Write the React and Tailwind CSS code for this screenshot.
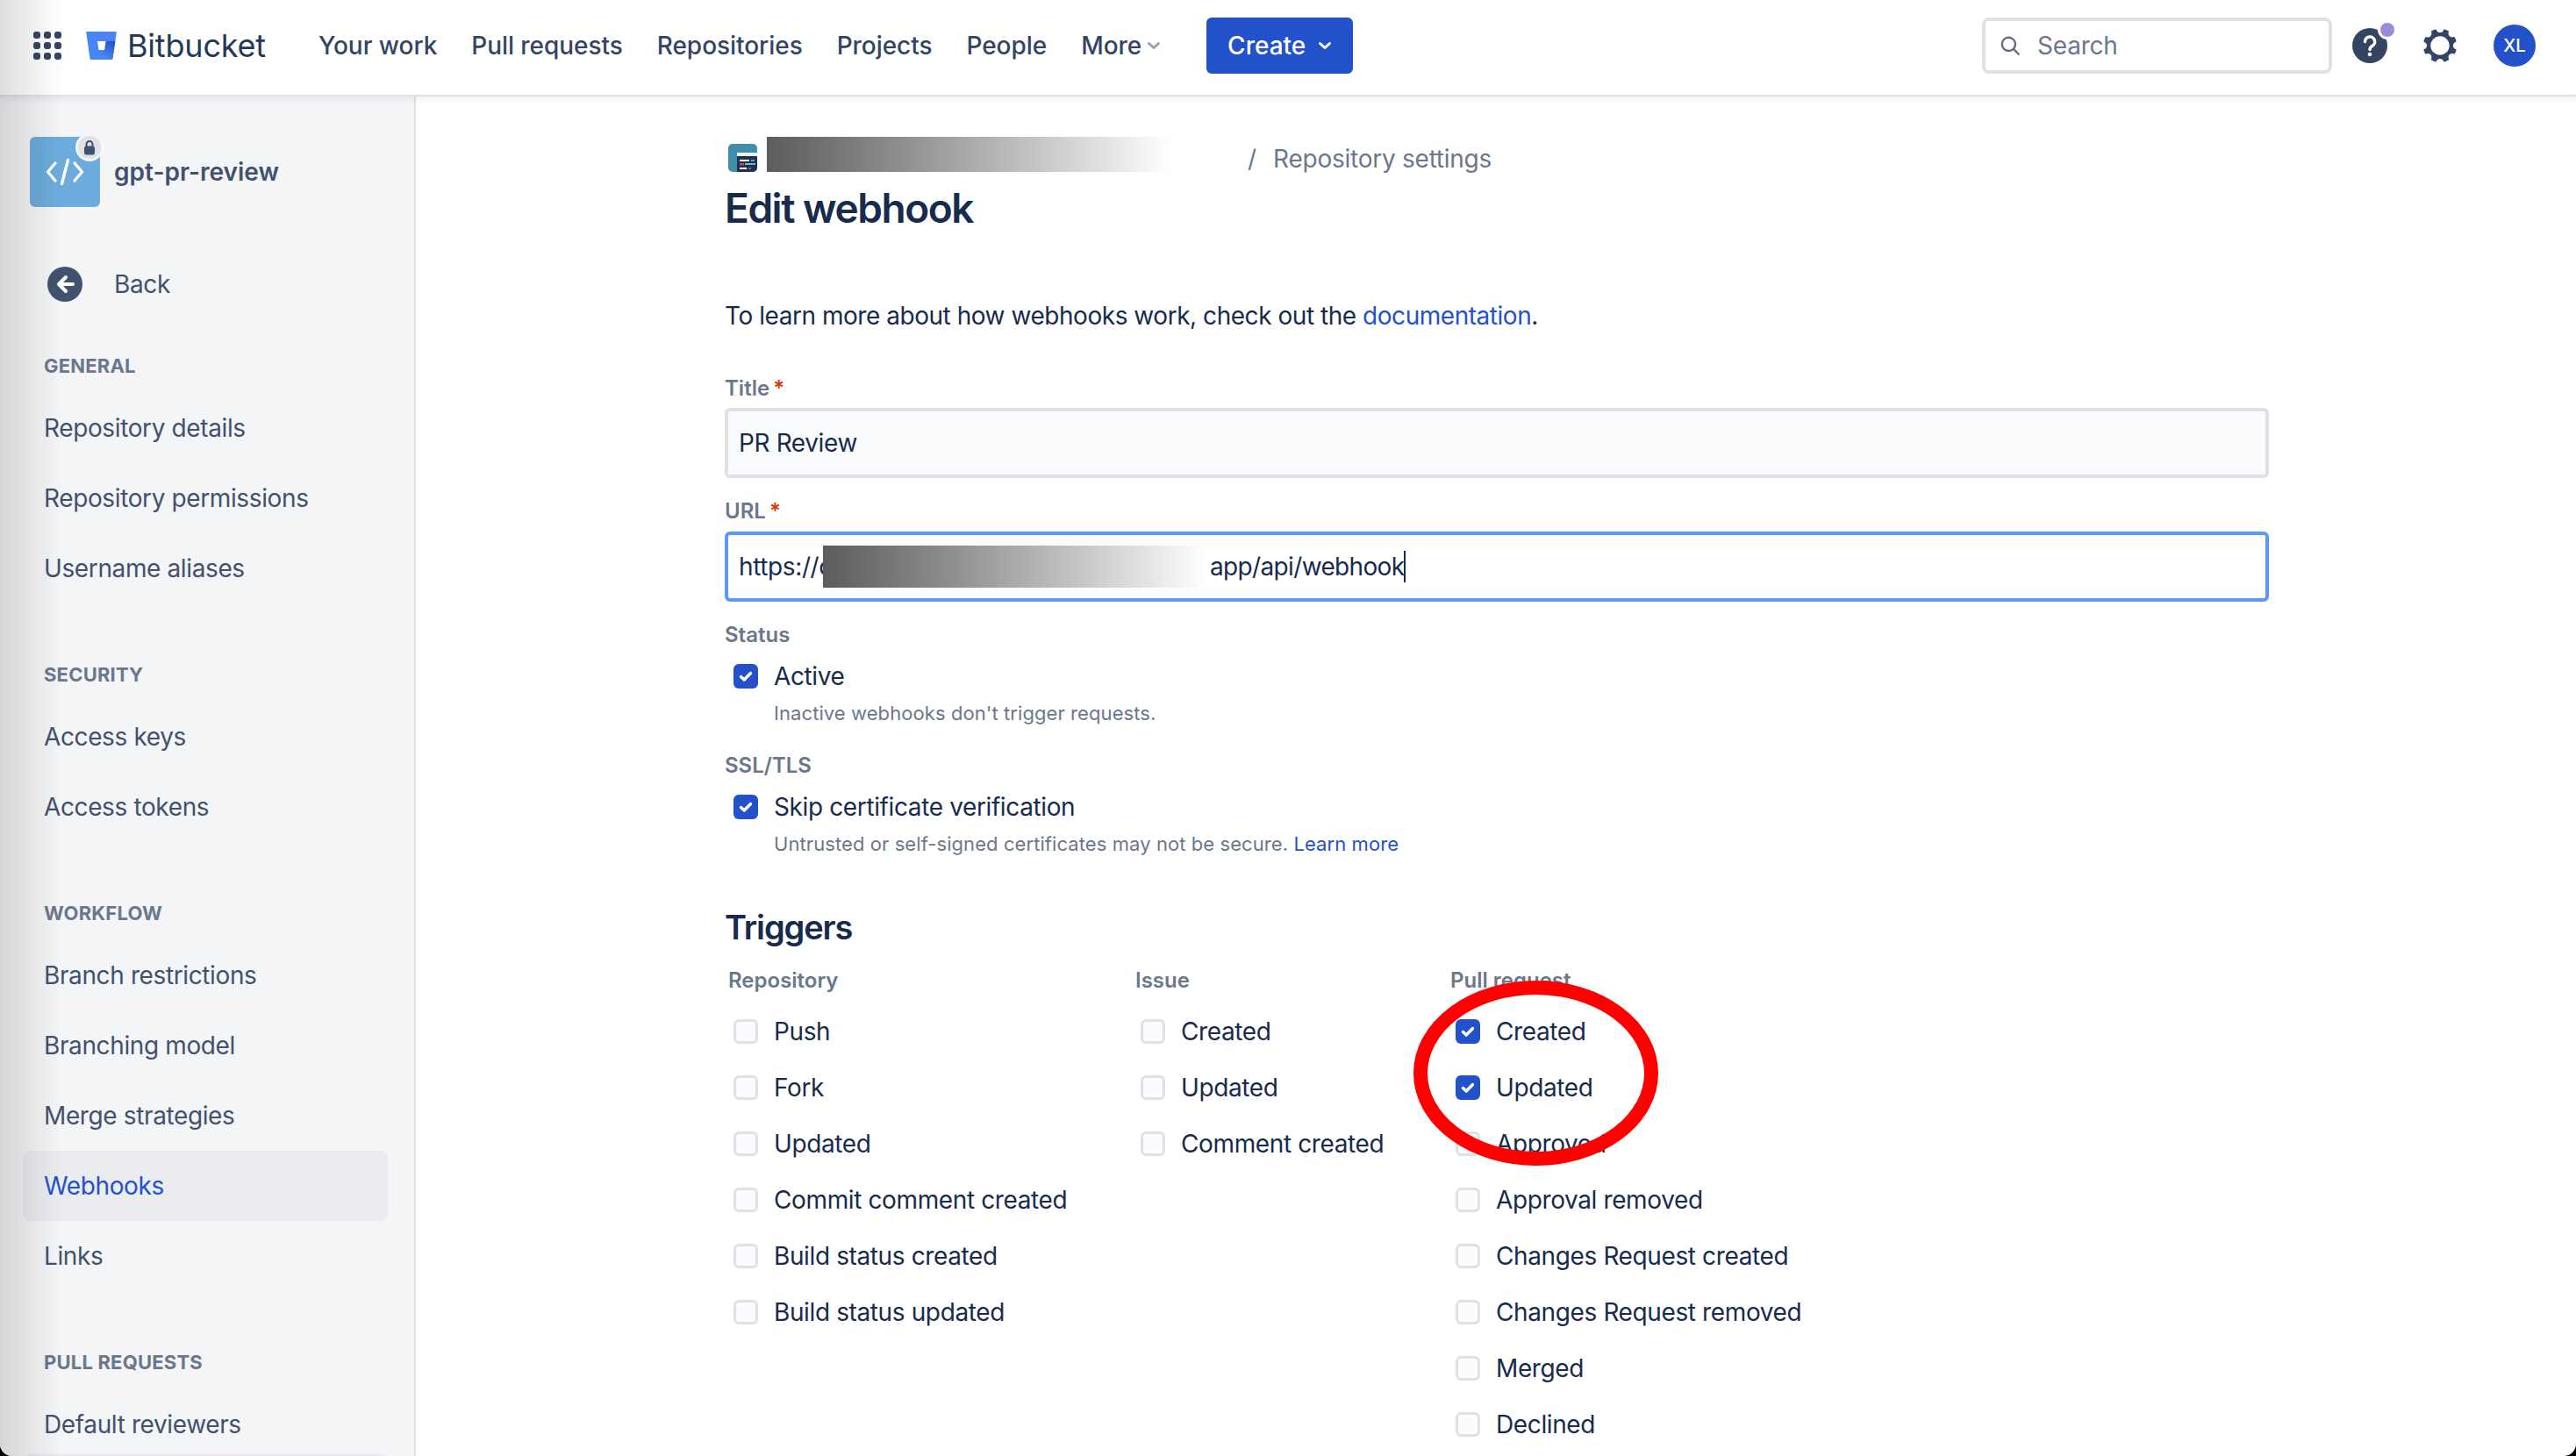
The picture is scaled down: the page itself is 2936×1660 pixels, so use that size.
import React from 'react';

const GEAR = "M11.701 16.7a5.002 5.002 0 110-10.003 5.002 5.002 0 010 10.004m8.368-3.117a1.995 1.995 0 01-1.346-1.885c0-.876.563-1.613 1.345-1.885a.48.48 0 00.315-.574 8.947 8.947 0 00-.836-1.993.477.477 0 00-.598-.195 2.04 2.04 0 01-1.29.08 1.988 1.988 0 01-1.404-1.395 2.04 2.04 0 01.076-1.297.478.478 0 00-.196-.597 8.98 8.98 0 00-1.975-.826.479.479 0 00-.574.314 1.995 1.995 0 01-1.885 1.346 1.994 1.994 0 01-1.884-1.345.482.482 0 00-.575-.315c-.708.2-1.379.485-2.004.842a.47.47 0 00-.198.582A2.002 2.002 0 014.445 7.06a.478.478 0 00-.595.196 8.946 8.946 0 00-.833 1.994.48.48 0 00.308.572 1.995 1.995 0 011.323 1.877c0 .867-.552 1.599-1.324 1.877a.479.479 0 00-.308.57 8.99 8.99 0 00.723 1.79.477.477 0 00.624.194c.595-.273 1.343-.264 2.104.238.117.077.225.185.302.3.527.8.512 1.58.198 2.188a.473.473 0 00.168.628 8.946 8.946 0 002.11.897.474.474 0 00.57-.313 1.995 1.995 0 011.886-1.353c.878 0 1.618.567 1.887 1.353a.475.475 0 00.57.313 8.964 8.964 0 002.084-.883.473.473 0 00.167-.631c-.318-.608-.337-1.393.191-2.195.077-.116.185-.225.302-.302.772-.511 1.527-.513 2.125-.23a.477.477 0 00.628-.19 8.925 8.925 0 00.728-1.793.478.478 0 00-.314-.573";

function Chevron({ className }) {
  return (
    <svg viewBox="0 0 16 10" className={className} fill="none" stroke="currentColor" strokeWidth="3" strokeLinecap="round" strokeLinejoin="round">
      <path d="M2.5 2.5 L8 7.5 L13.5 2.5" />
    </svg>
  );
}

function AppGrid() {
  const pts = [0, 12, 24];
  return (
    <svg width="32" height="32" viewBox="0 0 32 32" className="shrink-0">
      {pts.map((y) => pts.map((x) => <rect key={`${x}-${y}`} x={x} y={y} width="8" height="8" rx="3" fill="#344563" />))}
    </svg>
  );
}

function Logo() {
  return (
    <svg width="35" height="32" viewBox="0 0 35 32" className="shrink-0">
      <defs>
        <linearGradient id="bbg" x1="1" y1="0" x2="0.45" y2="0.8">
          <stop offset="0" stopColor="#1b4fc4" />
          <stop offset="1" stopColor="#4a86f3" />
        </linearGradient>
      </defs>
      <path d="M1 0 H34 Q35 0 34.8 1 L30.5 30.8 Q30.3 32 29.2 32 H5.8 Q4.7 32 4.5 30.8 L0.2 1 Q0 0 1 0 Z" fill="#4a86f3" />
      <path d="M22.5 11 H33.3 L30.5 30.8 Q30.3 32 29.2 32 H8 L21 21 Z" fill="url(#bbg)" />
      <path d="M13 11 H22.5 L21 21 H14.5 Z" fill="#fff" />
    </svg>
  );
}

function Check({ on }) {
  if (!on) return <span className="block w-[28px] h-[28px] shrink-0 rounded-[6px] border-[3px] border-[#dfe1e6] bg-[#fafbfc]" />;
  return (
    <span className="flex w-[28px] h-[28px] shrink-0 items-center justify-center rounded-[6px] bg-[#2351c9]">
      <svg width="28" height="28" viewBox="0 0 28 28" fill="none" stroke="#fff" strokeWidth="3.4" strokeLinecap="round" strokeLinejoin="round">
        <path d="M8.5 14.5 L12.2 18 L19.5 10.5" />
      </svg>
    </span>
  );
}

function SideHead({ children, first }) {
  return (
    <div className={`h-[32px] flex items-center pl-[50px] text-[22px] font-bold tracking-[0.2px] text-[#6b778c] uppercase ${first ? 'mt-[37px]' : 'mt-[65px]'} mb-[15px]`}>
      {children}
    </div>
  );
}

function SideItem({ children, active }) {
  return (
    <div className={`h-[80px] flex items-center ml-[26px] mr-[30px] pl-[24px] rounded-[8px] text-[28px] tracking-[-0.38px] ${active ? 'bg-[#ebecf0] text-[#2351c9]' : 'text-[#42526e]'}`}>
      {children}
    </div>
  );
}

function Label({ children, req, className }) {
  return (
    <div className={`h-[32px] flex items-center text-[24px] font-semibold text-[#6b778c] ${className}`}>
      {children}
      {req && <span className="ml-[4px] text-[#de350b]">*</span>}
    </div>
  );
}

function Row({ label, on }) {
  return (
    <div className="h-[64px] flex items-center pl-[10px] text-[28px] tracking-[-0.38px] text-[#172b4d] whitespace-nowrap">
      <Check on={on} />
      <span className="ml-[18px]">{label}</span>
    </div>
  );
}

function Column({ title, items, w }) {
  return (
    <div className={w}>
      <div className="h-[32px] flex items-center pl-[4px] text-[24px] font-semibold text-[#6b778c]">{title}</div>
      <div className="mt-[10px]">
        {items.map(([l, on]) => <Row key={l} label={l} on={on} />)}
      </div>
    </div>
  );
}

const nav = ['Your work', 'Pull requests', 'Repositories', 'Projects', 'People'];

export default function App() {
  return (
    <div className="h-[1660px] w-[2936px] bg-black font-['Inter',sans-serif]">
      <div className="relative h-full w-full overflow-hidden rounded-b-[14px] bg-white flex flex-col">
        <header className="relative z-10 h-[108px] shrink-0 bg-white flex items-center pb-[4px] shadow-[0_2px_0_#dfe1e6,0_5px_8px_rgba(9,30,66,0.07)]">
          <div className="ml-[38px]"><AppGrid /></div>
          <div className="ml-[28px]"><Logo /></div>
          <span className="ml-[12px] w-[218px] text-[36px] font-normal tracking-[-0.2px] text-[#253858] leading-none">Bitbucket</span>
          <nav className="flex items-center text-[28px] font-medium tracking-[-0.05px] text-[#344563]">
            {nav.map((n) => <span key={n} className="mr-[39px] whitespace-nowrap">{n}</span>)}
            <span className="flex items-center whitespace-nowrap">More<Chevron className="ml-[6px] w-[16px] h-[10px] text-[#97a0af]" /></span>
          </nav>
          <button className="ml-[52px] h-[64px] w-[167px] rounded-[6px] bg-[#2351c9] text-white text-[28px] font-medium flex items-center justify-center">
            Create<Chevron className="ml-[14px] w-[16px] h-[10px]" />
          </button>
          <div className="ml-auto w-[399px] h-[64px] rounded-[8px] border-[4px] border-[#dfe1e6] bg-white flex items-center pl-[15px] text-[28px] tracking-[-0.2px] text-[#6b778c]">
            <svg width="26" height="26" viewBox="0 0 24 24" fill="none" stroke="#5e6c84" strokeWidth="2.2" strokeLinecap="round"><circle cx="10.5" cy="10.5" r="7" /><path d="M16 16 L21 21" /></svg>
            <span className="ml-[18px]">Search</span>
          </div>
          <svg width="52" height="52" viewBox="0 0 52 52" className="ml-[23px] mr-[28px] shrink-0">
            <circle cx="20" cy="26" r="20" fill="#344563" />
            <circle cx="40" cy="8" r="11" fill="#fff" />
            <circle cx="40" cy="8" r="8" fill="#998dd9" />
            <path d="M14.5 21.5 a5.6 5.6 0 1 1 8.2 5 c-1.8 1 -2.7 2 -2.7 4" fill="none" stroke="#fff" strokeWidth="3.4" strokeLinecap="round" />
            <circle cx="20" cy="36" r="2.3" fill="#fff" />
          </svg>
          <svg width="40" height="40" viewBox="2.4 2.3 18.6 18.8" className="shrink-0">
            <path d={GEAR} fill="#344563" fillRule="evenodd" />
          </svg>
          <div className="ml-[41px] mr-[46px] w-[48px] h-[48px] shrink-0 rounded-full bg-[#2351c9] text-white text-[20px] font-medium flex items-center justify-center">XL</div>
        </header>

        <div className="flex flex-1 min-h-0">
          <aside className="w-[474px] shrink-0 overflow-hidden bg-[#f4f5f7] border-r-2 border-[#dfe1e6] pt-[48px]">
            <div className="flex items-center pl-[34px]">
              <div className="relative w-[80px] h-[80px] rounded-[6px] bg-[#6cabdc] flex items-center justify-center">
                <svg width="44" height="44" viewBox="0 0 44 44" fill="none" stroke="#fff" strokeWidth="3.4" strokeLinecap="round" strokeLinejoin="round">
                  <path d="M11 12 L2.5 22 L11 32 M33 12 L41.5 22 L33 32 M25.5 8.5 L18.5 35.5" />
                </svg>
                <div className="absolute -top-[1px] -right-[1px] w-[26px] h-[26px] rounded-full bg-[#dfe1e6] ring-[3px] ring-[#f4f5f7] flex items-center justify-center">
                  <svg width="14" height="17" viewBox="0 0 14 17">
                    <path d="M3.5 7 V4.5 a3.5 3.5 0 0 1 7 0 V7" fill="none" stroke="#42526e" strokeWidth="2" />
                    <rect x="1" y="6.5" width="12" height="10" rx="2.5" fill="#42526e" />
                  </svg>
                </div>
              </div>
              <span className="ml-[16px] text-[28px] font-semibold text-[#42526e]">gpt-pr-review</span>
            </div>
            <div className="mt-[48px] h-[80px] flex items-center pl-[54px] text-[28px] tracking-[-0.38px] text-[#42526e]">
              <svg width="40" height="40" viewBox="0 0 40 40" className="shrink-0">
                <circle cx="20" cy="20" r="20" fill="#42526e" />
                <path d="M21 12 L13 20 L21 28 M14 20 H29" fill="none" stroke="#fff" strokeWidth="4" strokeLinecap="round" strokeLinejoin="round" />
              </svg>
              <span className="ml-[36px]">Back</span>
            </div>

            <SideHead first>General</SideHead>
            <SideItem>Repository details</SideItem>
            <SideItem>Repository permissions</SideItem>
            <SideItem>Username aliases</SideItem>

            <SideHead>Security</SideHead>
            <SideItem>Access keys</SideItem>
            <SideItem>Access tokens</SideItem>

            <SideHead>Workflow</SideHead>
            <SideItem>Branch restrictions</SideItem>
            <SideItem>Branching model</SideItem>
            <SideItem>Merge strategies</SideItem>
            <SideItem active>Webhooks</SideItem>
            <SideItem>Links</SideItem>

            <SideHead>Pull requests</SideHead>
            <div className="h-[73px]">
              <SideItem>Default reviewers</SideItem>
            </div>
            <div className="h-[80px] ml-[26px] mr-[30px] rounded-[8px] bg-[#ebecf0]" />
          </aside>

          <main className="flex-1 min-w-0 pl-[352px] pt-[48px] text-[#172b4d]">
            <div className="w-[1760px]">
              <div className="h-[40px] flex items-end">
                <svg width="33" height="32" viewBox="0 0 33 32" className="ml-[4px] shrink-0">
                  <rect width="33" height="32" rx="5" fill="#3f8fa8" />
                  <path d="M10 10 H33 V27 a5 5 0 0 1 -5 5 H10 Z" fill="#1d2f55" />
                  <rect x="10" y="10" width="23" height="4" fill="#eef2f5" />
                  <rect x="13" y="18" width="11" height="2" fill="#fff" />
                  <rect x="26" y="18" width="4" height="2" fill="#5aa5c8" />
                  <rect x="13" y="22" width="5" height="2.5" fill="#c9474f" />
                  <rect x="19" y="22" width="12" height="2" fill="#63c2b8" />
                  <rect x="13" y="27" width="8" height="2" fill="#fff" />
                  <rect x="23" y="27" width="3" height="2" fill="#c9474f" />
                </svg>
                <div className="ml-[11px] w-[461px] h-[40px] shrink-0 bg-linear-to-r from-[#5c5c5c] to-white" />
                <span className="ml-[87px] -mb-[5px] text-[28px] leading-[40px] text-[#6b778c]">/</span>
                <span className="ml-[19px] -mb-[5px] text-[28px] leading-[40px] tracking-[-0.25px] text-[#6b778c]">Repository settings</span>
              </div>

              <h1 className="mt-[13px] h-[56px] flex items-center text-[46px] font-semibold tracking-[-0.032em] text-[#172b4d]">Edit webhook</h1>

              <p className="mt-[75px] h-[40px] flex items-center text-[28px] tracking-[-0.46px] whitespace-pre">
                To learn more about how webhooks work, check out the <span className="text-[#2351c9]">documentation</span>.
              </p>

              <Label req className="mt-[47px]">Title</Label>
              <div className="mt-[6px] h-[80px] rounded-[6px] border-[4px] border-[#dfe1e6] bg-[#fafbfc] flex items-center pl-[12px] text-[28px] tracking-[-0.38px]">PR Review</div>

              <Label req className="mt-[22px]">URL</Label>
              <div className="mt-[7px] h-[80px] rounded-[6px] border-[4px] border-[#5f97f5] bg-white flex items-center pl-[12px] text-[28px]">
                <span className="w-[96px] shrink-0 tracking-[-0.38px] whitespace-pre">https://c</span>
                <div className="relative w-[437px] h-[48px] shrink-0 bg-linear-to-r from-[#5c5c5c] to-white" />
                <span className="ml-[4px] tracking-[-0.65px]">app/api/webhook</span>
                <span className="w-[2px] h-[36px] bg-[#172b4d]" />
              </div>

              <Label className="mt-[22px]">Status</Label>
              <div className="mt-[11px] h-[40px] flex items-center pl-[10px] text-[28px] tracking-[-0.38px]">
                <Check on /><span className="ml-[18px]">Active</span>
              </div>
              <div className="mt-[6px] h-[32px] flex items-center pl-[56px] text-[22px] tracking-[0.08px] text-[#6b778c]">Inactive webhooks don't trigger requests.</div>

              <Label className="mt-[28px]">SSL/TLS</Label>
              <div className="mt-[11px] h-[40px] flex items-center pl-[10px] text-[28px] tracking-[-0.38px]">
                <Check on /><span className="ml-[18px]">Skip certificate verification</span>
              </div>
              <div className="mt-[6px] h-[32px] flex items-center pl-[56px] text-[22px] tracking-[0.08px] text-[#6b778c] whitespace-pre">
                Untrusted or self-signed certificates may not be secure. <span className="text-[#2351c9]">Learn more</span>
              </div>

              <h2 className="mt-[55px] h-[48px] flex items-center text-[38px] font-semibold tracking-[-0.03em]">Triggers</h2>

              <div className="mt-[21px] flex">
                <Column w="w-[464px]" title="Repository" items={[['Push'], ['Fork'], ['Updated'], ['Commit comment created'], ['Build status created'], ['Build status updated']]} />
                <Column w="w-[359px]" title="Issue" items={[['Created'], ['Updated'], ['Comment created']]} />
                <Column w="w-[500px]" title="Pull request" items={[['Created', true], ['Updated', true], ['Approved'], ['Approval removed'], ['Changes Request created'], ['Changes Request removed'], ['Merged'], ['Declined']]} />
              </div>
            </div>
          </main>
        </div>

        <div className="absolute left-0 top-0 h-full w-[70px] pointer-events-none z-20 bg-linear-to-r from-[rgba(0,0,0,0.13)] to-transparent" />
        <svg width="279" height="211" viewBox="0 0 279 211" className="absolute left-[1611px] top-[1118px] z-20 pointer-events-none" fill="none">
          <ellipse cx="139.5" cy="105.5" rx="131.5" ry="97.5" stroke="#ff0000" strokeWidth="16" />
        </svg>
      </div>
    </div>
  );
}
